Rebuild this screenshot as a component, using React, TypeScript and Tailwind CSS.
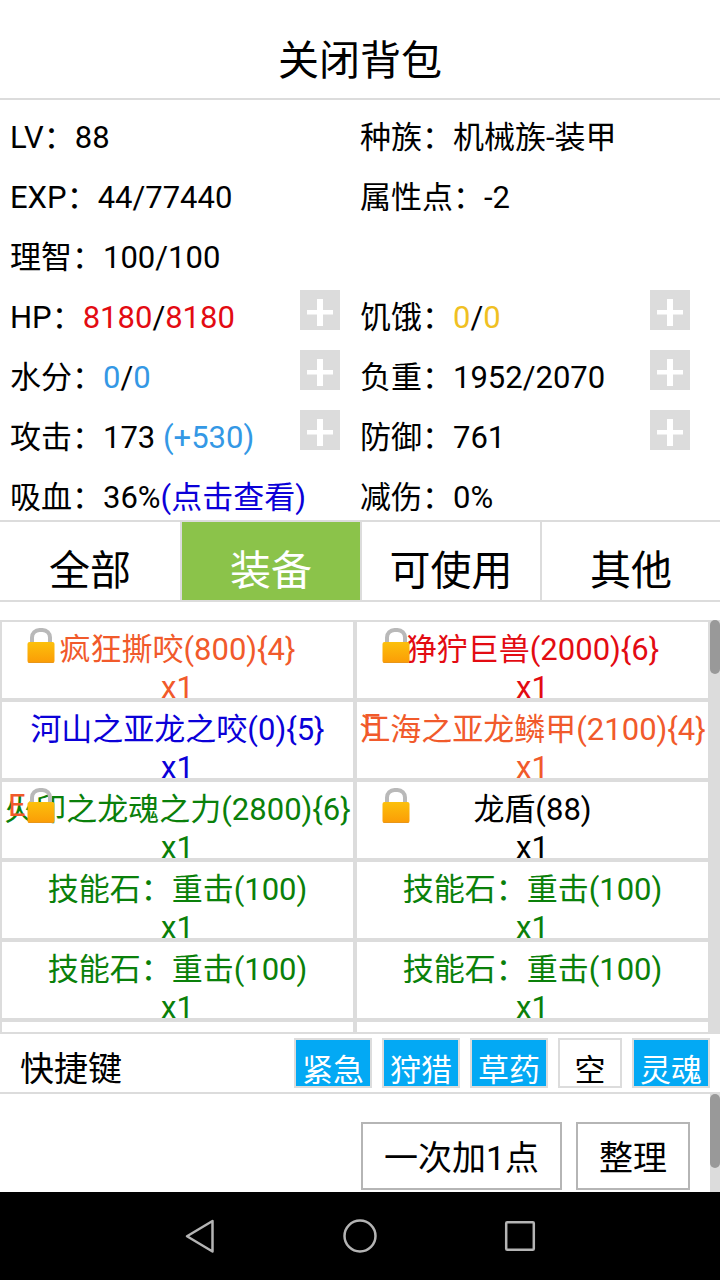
import { useState } from 'react'

type Item = {
  id: number
  name: string
  color: string
  locked?: boolean
  equipped?: boolean
}

const items: Item[] = [
  { id: 1, name: '疯狂撕咬(800){4}', color: 'text-[#f15a2b]', locked: true },
  { id: 2, name: '狰狞巨兽(2000){6}', color: 'text-[#e30b12]', locked: true },
  { id: 3, name: '河山之亚龙之咬(0){5}', color: 'text-[#0b00d8]' },
  { id: 4, name: '江海之亚龙鳞甲(2100){4}', color: 'text-[#f15a2b]', equipped: true },
  { id: 5, name: '火印之龙魂之力(2800){6}', color: 'text-[#0a800a]', locked: true, equipped: true },
  { id: 6, name: '龙盾(88)', color: 'text-black', locked: true },
  { id: 7, name: '技能石：重击(100)', color: 'text-[#0a800a]' },
  { id: 8, name: '技能石：重击(100)', color: 'text-[#0a800a]' },
  { id: 9, name: '技能石：重击(100)', color: 'text-[#0a800a]' },
  { id: 10, name: '技能石：重击(100)', color: 'text-[#0a800a]' },
  { id: 11, name: '', color: 'text-[#0a800a]' },
  { id: 12, name: '', color: 'text-[#0a800a]' },
]

const tabs = ['全部', '装备', '可使用', '其他']
const shortcuts = ['紧急', '狩猎', '草药', '空', '灵魂']

function Stat({ label, children, onAdd }: { label: string; children?: React.ReactNode; onAdd?: () => void }) {
  return (
    <div className="flex h-15 items-start justify-between px-2.5">
      <div className="whitespace-nowrap pt-4 leading-11">
        {label}：{children}
      </div>
      {onAdd && (
        <button
          onClick={onAdd}
          aria-label={`${label} +`}
          className="mt-2.5 flex h-10 w-10 shrink-0 items-center justify-center bg-[#dcdcdc]"
        >
          <svg viewBox="0 0 40 40" className="h-10 w-10" fill="#fff">
            <path d="M17 9h6v27h-6zM7 20h26v4.500H7z" />
          </svg>
        </button>
      )}
    </div>
  )
}

function Lock() {
  return (
    <svg viewBox="0 0 28 36" className="absolute left-[25px] top-1.5 h-9 w-7">
      <defs>
        <linearGradient id="lockBody" x1="0" y1="0" x2="0" y2="1">
          <stop offset="0" stopColor="#fcc00c" />
          <stop offset="1" stopColor="#fb9c06" />
        </linearGradient>
      </defs>
      <path d="M5 15V9.500a7.500 7.500 0 0 1 7.500-7.500h3a7.500 7.500 0 0 1 7.500 7.500V15" fill="none" stroke="#b9b9b9" strokeWidth="4" />
      <rect x="0.500" y="14" width="27" height="21" rx="2" fill="url(#lockBody)" />
      <path d="M1.500 34.500h25" stroke="#e8961a" strokeWidth="1" />
    </svg>
  )
}

function ItemCell({ item }: { item: Item }) {
  return (
    <button className={`relative h-20 overflow-hidden border-2 border-[#dcdcdc] pt-[9px] leading-[38px] ${item.color}`}>
      {item.name && (
        <span className="flex h-full flex-col items-center whitespace-nowrap">
          <span>{item.name}</span>
          <span>x1</span>
        </span>
      )}
      {item.equipped && <span className="absolute left-1.5 top-[5px] text-[#f15a2b]">E</span>}
      {item.locked && <Lock />}
    </button>
  )
}

export default function App() {
  const [tab, setTab] = useState('装备')
  const [points, setPoints] = useState(-2)
  const add = () => setPoints(points - 1)

  return (
    <div className="flex h-screen w-full flex-col overflow-hidden bg-white font-[Roboto,'Noto_Sans_CJK_SC',sans-serif] text-[31px] text-black">
      <header className="flex h-25 shrink-0 justify-center border-b-2 border-[#dcdcdc] pt-6">
        <button className="text-[41px] leading-[74px]">关闭背包</button>
      </header>

      <section className="grid shrink-0 grid-cols-2 pr-5">
        <Stat label="LV">88</Stat>
        <Stat label="种族">机械族-装甲</Stat>
        <Stat label="EXP">44/77440</Stat>
        <Stat label="属性点">{points}</Stat>
        <Stat label="理智">100/100</Stat>
        <div />
        <Stat label="HP" onAdd={add}>
          <span className="text-[#e30b12]">8180</span>/<span className="text-[#e30b12]">8180</span>
        </Stat>
        <Stat label="饥饿" onAdd={add}>
          <span className="text-[#f0c022]">0</span>/<span className="text-[#f0c022]">0</span>
        </Stat>
        <Stat label="水分" onAdd={add}>
          <span className="text-[#3498e5]">0</span>/<span className="text-[#3498e5]">0</span>
        </Stat>
        <Stat label="负重" onAdd={add}>1952/2070</Stat>
        <Stat label="攻击" onAdd={add}>
          173 <span className="text-[#3498e5]">(+530)</span>
        </Stat>
        <Stat label="防御" onAdd={add}>761</Stat>
        <Stat label="吸血">
          36%<a href="#" className="text-[#0b00d8]">(点击查看)</a>
        </Stat>
        <Stat label="减伤">0%</Stat>
      </section>

      <nav className="grid h-[82px] shrink-0 grid-cols-4 border-y-2 border-[#dcdcdc]">
        {tabs.map((t, i) => (
          <button
            key={t}
            onClick={() => setTab(t)}
            className={`flex justify-center pt-5 text-[41px] leading-[58px] ${i > 0 ? 'border-l-2 border-[#dcdcdc]' : ''} ${
              t === tab ? 'bg-[#8bc34a] text-white' : ''
            }`}
          >
            {t}
          </button>
        ))}
      </nav>

      <main className="mt-[18px] flex min-h-0 flex-1">
        <div className="grid flex-1 auto-rows-min grid-cols-2 overflow-hidden">
          {items.map((item) => (
            <ItemCell key={item.id} item={item} />
          ))}
        </div>
        <div className="w-2.5 bg-[#dcdcdc]">
          <div className="h-[54px] rounded-full bg-[#999]" />
        </div>
      </main>

      <section className="flex h-[62px] shrink-0 items-center justify-between border-y-2 border-[#dcdcdc] pl-5 pr-2.5">
        <h2 className="pt-3 text-[34px] leading-[46px]">快捷键</h2>
        <div className="flex gap-2.5">
          {shortcuts.map((s) => (
            <button
              key={s}
              className={`h-[50px] min-w-16 border-2 border-[#dcdcdc] px-1.5 pt-4 leading-[30px] ${
                s === '空' ? '' : 'bg-[#03a9f4] text-white'
              }`}
            >
              {s}
            </button>
          ))}
        </div>
      </section>

      <footer className="flex h-[98px] shrink-0">
        <div className="flex flex-1 items-end justify-end gap-3.5 pb-0.5 pr-5">
          <button className="h-17 border-2 border-[#b5b5b5] px-[21px] pt-1 text-[34px] leading-15">一次加1点</button>
          <button className="h-17 border-2 border-[#b5b5b5] px-[21px] pt-1 text-[34px] leading-15">整理</button>
        </div>
        <div className="w-2.5 bg-[#dcdcdc]">
          <div className="h-[74px] rounded-full bg-[#999]" />
        </div>
      </footer>

      <div className="flex h-22 shrink-0 items-center justify-center gap-30 bg-black">
        <button aria-label="返回">
          <svg viewBox="0 0 40 40" className="h-10 w-10" fill="none" stroke="#b4b4b4" strokeWidth="2.500" strokeLinejoin="round">
            <path d="M32.500 5v30.500L7 20.200z" />
          </svg>
        </button>
        <button aria-label="主页">
          <svg viewBox="0 0 40 40" className="h-10 w-10" fill="none" stroke="#b4b4b4" strokeWidth="2.500">
            <circle cx="20" cy="20" r="15.500" />
          </svg>
        </button>
        <button aria-label="最近">
          <svg viewBox="0 0 40 40" className="h-10 w-10" fill="none" stroke="#b4b4b4" strokeWidth="2.500">
            <rect x="6.200" y="6.200" width="27.600" height="27.600" rx="1" />
          </svg>
        </button>
      </div>
    </div>
  )
}
